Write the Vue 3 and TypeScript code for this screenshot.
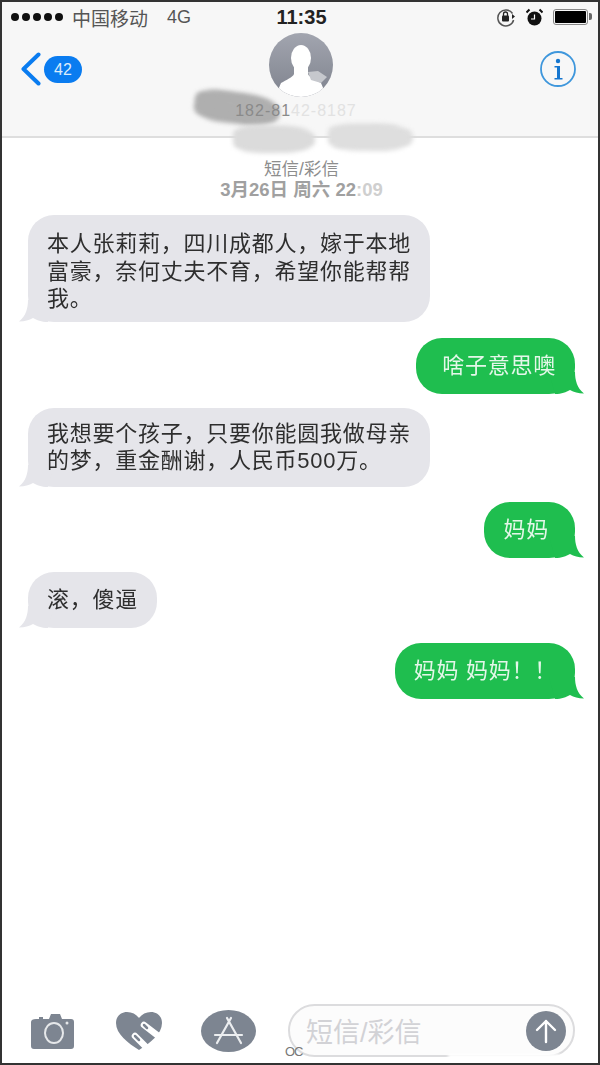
<template>
  <div class="phone">
    <header class="top">
      <span class="smudge s1"></span>
      <span class="smudge s2"></span>
      <span class="smudge s3"></span>
      <div class="status">
        <div class="status-left">
          <span class="dots"><i v-for="n in 5" :key="n"></i></span>
          <span class="carrier">中国移动</span>
          <span class="net">4G</span>
        </div>
        <div class="time">11:35</div>
        <div class="status-right">
          <svg width="20" height="20" viewBox="0 0 20 20">
            <path d="M16.5 6.5A8 8 0 1 0 17.6 13" fill="none" stroke="#555" stroke-width="1.5" />
            <path d="M15 9h5l-2.500 3z" fill="#222" transform="rotate(-90 17 10)" />
            <rect x="6" y="8.500" width="7" height="6" rx="1" fill="#222" />
            <path d="M7.500 9V7a2 2 0 0 1 4 0v2" fill="none" stroke="#222" stroke-width="1.300" />
          </svg>
          <svg width="17" height="19" viewBox="0 0 17 19">
            <circle cx="8.500" cy="10.500" r="7" fill="#111" />
            <path d="M8.500 6.500v4.500H5" fill="none" stroke="#fff" stroke-width="1.200" />
            <path d="M.5 4.500 3.500 1.500M16.500 4.500l-3-3" stroke="#111" stroke-width="2" />
          </svg>
          <span class="battery"><i></i></span>
        </div>
      </div>

      <div class="nav">
        <div class="back">
          <svg width="22" height="34" viewBox="0 0 22 34">
            <path d="M18.500 2.500 3.500 17l15 14.500" fill="none" stroke="#0a7cf0" stroke-width="4" stroke-linecap="round" stroke-linejoin="round" />
          </svg>
          <span class="count">42</span>
        </div>
        <div class="contact">
          <svg class="avatar" width="64" height="64" viewBox="0 0 64 64">
            <defs>
              <linearGradient id="av" x1="0" y1="0" x2="0" y2="1">
                <stop offset="0" stop-color="#a2a5af" />
                <stop offset="1" stop-color="#7f838e" />
              </linearGradient>
              <clipPath id="avc"><circle cx="32" cy="32" r="32" /></clipPath>
            </defs>
            <circle cx="32" cy="32" r="32" fill="url(#av)" />
            <g clip-path="url(#avc)">
              <ellipse cx="32" cy="25" rx="10" ry="13" fill="#fff" />
              <path d="M25 34h14v7c1 3 8 6 13 9l6 14H6l6-14c5-3 12-6 13-9z" fill="#fff" />
              <path d="M39 39 49 38 58 44 52 50 42 47z" fill="#c6c8cd" />
            </g>
          </svg>
          <div class="number">182-81<span class="faded">42-8187</span></div>
        </div>
        <svg class="info" width="38" height="38" viewBox="0 0 38 38">
          <circle cx="19" cy="19" r="17" fill="none" stroke="#3f97dc" stroke-width="1.800" />
          <circle cx="19" cy="11" r="2.200" fill="#1576cf" />
          <path d="M15.500 16H21v12h2.500v1.500h-8V28H18V17.500h-2.500z" fill="#1576cf" />
        </svg>
      </div>
    </header>

    <main class="thread">
      <div class="stamp">
        <div class="kind">短信/彩信</div>
        <div class="date">3月26日 周六 22<span class="faded">:09</span></div>
      </div>
      <div v-for="m in messages" :key="m.id" class="row" :class="m.mine ? 'mine' : 'theirs'" :style="{ marginTop: m.gap + 'px' }">
        <div class="bubble" :style="{ padding: `12px ${m.pad[1]}px 12px ${m.pad[0]}px` }">
          <span class="text">{{ m.text }}</span>
          <svg class="tail" width="36" height="22" viewBox="0 0 36 22">
            <path d="M10 0C10 8 8 16 1 21.500 7 21.500 11 20 15 18 19 20 23 22 30 22L36 0z" />
          </svg>
        </div>
      </div>
    </main>

    <footer class="bottom">
      <svg width="46" height="38" viewBox="0 0 46 38">
        <path d="M5 7h3V5h4v2h6l2-5h9l2 5h9c2 0 3 1 3 3v24c0 2-1 3-3 3H3c-2 0-3-1-3-3V10c0-2 2-3 5-3z" fill="#7d8591" />
        <ellipse cx="23" cy="21" rx="9" ry="10" fill="none" stroke="#e6e8ea" stroke-width="2" />
        <circle cx="36" cy="11" r="1.500" fill="#e6e8ea" />
      </svg>
      <svg width="46" height="40" viewBox="0 0 46 40">
        <path d="M23 39C12 32 0 23 0 12 0 5 5 1 11 1c5 0 9 2 12 6 3-4 7-6 12-6 6 0 11 4 11 11 0 11-12 20-23 27z" fill="#7d8591" />
        <path d="M28 14 50 31M19 25 36 42" stroke="#fff" stroke-width="6.500" stroke-linecap="round" />
        <path d="M28 14 31 17M19 25 23 29" stroke="#7d8591" stroke-width="2.500" stroke-linecap="round" />
      </svg>
      <svg width="55" height="42" viewBox="0 0 55 42">
        <ellipse cx="27.500" cy="21" rx="27.500" ry="21" fill="#7d8591" />
        <path d="M30 8 16 33M26 8l14 25M14 25h27" fill="none" stroke="#eceef0" stroke-width="2.200" stroke-linecap="round" />
      </svg>
      <div class="input">
        <span class="placeholder">短信/彩信</span>
        <span class="send">
          <svg width="24" height="26" viewBox="0 0 24 26">
            <path d="M12 24V3M3 12l9-9 9 9" fill="none" stroke="#fff" stroke-width="2.400" stroke-linecap="round" stroke-linejoin="round" />
          </svg>
        </span>
        <span class="mark">OC</span>
      </div>
    </footer>
    <span class="wipe"></span>
  </div>
</template>

<script setup lang="ts">
interface Message {
  id: number
  text: string
  mine: boolean
  gap: number
  pad: [number, number]
}

const messages: Message[] = [
  { id: 1, text: '本人张莉莉，四川成都人，嫁于本地\n富豪，奈何丈夫不育，希望你能帮帮\n我。', mine: false, gap: 16, pad: [19, 19] },
  { id: 2, text: '啥子意思噢', mine: true, gap: 16, pad: [26, 19] },
  { id: 3, text: '我想要个孩子，只要你能圆我做母亲\n的梦，重金酬谢，人民币500万。', mine: false, gap: 14, pad: [19, 19] },
  { id: 4, text: '妈妈', mine: true, gap: 15, pad: [19, 26] },
  { id: 5, text: '滚，傻逼', mine: false, gap: 14, pad: [19, 19] },
  { id: 6, text: '妈妈 妈妈！！', mine: true, gap: 15, pad: [19, 18] },
]
</script>

<style>
body {
  background: #fff;
}
</style>

<style scoped>
.phone {
  position: relative;
  display: flex;
  flex-direction: column;
  box-sizing: border-box;
  width: 600px;
  height: 1065px;
  overflow: hidden;
  border: 2px solid #333;
  background: #fff;
  color: #333;
  font-family: "Liberation Sans", "Noto Sans CJK SC", sans-serif;
}

.top {
  position: relative;
  flex: 0 0 auto;
  height: 136px;
  box-sizing: border-box;
  border-bottom: 2px solid #dedede;
  background: #f7f7f7;
}

.status {
  position: relative;
  display: grid;
  grid-template-columns: 1fr auto 1fr;
  align-items: center;
  height: 30px;
  padding: 0 6px 0 9px;
}

.status-left {
  display: flex;
  align-items: center;
  color: #555;
  font-size: 19px;
}

.dots {
  display: flex;
  gap: 3px;
  margin-right: 9px;
}

.dots i {
  width: 8px;
  height: 8px;
  border-radius: 50%;
  background: #111;
}

.carrier {
  width: 95px;
}

.net {
  font-size: 18px;
}

.time {
  color: #222;
  font-size: 20px;
  font-weight: 700;
}

.status-right {
  display: flex;
  align-items: center;
  justify-content: flex-end;
  gap: 10px;
}

.battery {
  position: relative;
  box-sizing: border-box;
  width: 35px;
  height: 16px;
  margin-right: 4px;
  padding: 1px;
  border: 1px solid #888;
  border-radius: 3px;
}

.battery i {
  display: block;
  height: 100%;
  border-radius: 1px;
  background: #000;
}

.battery::after {
  content: "";
  position: absolute;
  top: 3px;
  right: -5px;
  width: 3px;
  height: 7px;
  border-radius: 0 2px 2px 0;
  background: #666;
}

.nav {
  position: relative;
  display: flex;
  align-items: flex-start;
  justify-content: space-between;
  padding: 0 21px 0 18px;
}

.back {
  display: flex;
  align-items: center;
  gap: 2px;
  margin-top: 20px;
}

.count {
  width: 38px;
  height: 27px;
  border-radius: 14px;
  background: #0a7cf0;
  color: #dcecfb;
  font-size: 16px;
  line-height: 27px;
  text-align: center;
}

.contact {
  position: absolute;
  top: 1px;
  left: 229px;
  display: flex;
  flex-direction: column;
  align-items: center;
  width: 140px;
}

.avatar {
  display: block;
}

.number {
  margin-top: 5px;
  margin-right: 10px;
  color: #8a8a8a;
  font-size: 16px;
  letter-spacing: 1px;
  white-space: nowrap;
}

.number .faded {
  color: #e2e2e2;
}

.info {
  margin-top: 18px;
}

.smudge {
  position: absolute;
  border-radius: 30% 45% 40% 35%;
  filter: blur(2px);
}

.s1 {
  top: 90px;
  left: 192px;
  width: 86px;
  height: 32px;
  background: repeating-linear-gradient(4deg, #a6a6a6 0 3px, #b8b8b8 3px 6px);
  transform: rotate(7deg);
}

.s2 {
  top: 123px;
  left: 231px;
  width: 82px;
  height: 28px;
  background: repeating-linear-gradient(2deg, #d6d6d6 0 3px, #e0e0e0 3px 6px);
}

.s3 {
  top: 121px;
  left: 326px;
  width: 85px;
  height: 28px;
  background: repeating-linear-gradient(-2deg, #d8d8d8 0 3px, #e4e4e4 3px 6px);
}

.thread {
  flex: 1 1 auto;
  padding: 0 23px 0 26px;
}

.stamp {
  margin-top: 21px;
  color: #8d8d8d;
  text-align: center;
}

.kind {
  font-size: 17.500px;
  line-height: 20px;
}

.date {
  padding-top: 1px;
  color: #a0a0a0;
  font-size: 18.500px;
  font-weight: 700;
  line-height: 19px;
}

.date .faded {
  color: #cfcfcf;
}

.row {
  display: flex;
}

.row.mine {
  justify-content: flex-end;
}

.bubble {
  position: relative;
  display: flex;
  align-items: center;
  box-sizing: border-box;
  min-height: 56px;
  border-radius: 26px;
  font-size: 22px;
  letter-spacing: 0.750px;
  line-height: 27.500px;
  white-space: pre;
}

.text {
  position: relative;
  z-index: 1;
  filter: blur(0.3px);
}

.stamp + .row .text {
  top: 3px;
}

.theirs .bubble {
  background: #e5e5ea;
  color: #2e2e2e;
}

.mine .bubble {
  background: #1fbe4f;
  color: #e4f7e9;
}

.tail {
  position: absolute;
  bottom: 0;
}

.theirs .tail {
  left: -10px;
  fill: #e5e5ea;
}

.mine .tail {
  right: -10px;
  fill: #1fbe4f;
  transform: scaleX(-1);
}

.bottom {
  flex: 0 0 auto;
  display: flex;
  align-items: center;
  height: 61px;
  padding: 0 23px 2px 29px;
}

.bottom svg:nth-child(2),
.bottom svg:nth-child(3) {
  margin-left: 39px;
}

.input {
  position: relative;
  flex: 1 1 auto;
  display: flex;
  align-items: center;
  justify-content: space-between;
  box-sizing: border-box;
  height: 53px;
  margin-left: 32px;
  padding: 0 7px 0 16px;
  border: 2px solid #dcdcde;
  border-radius: 27px;
  background: #fcfcfc;
}

.placeholder {
  color: #d2d2d6;
  font-size: 27px;
}

.send {
  display: flex;
  align-items: center;
  justify-content: center;
  width: 40px;
  height: 40px;
  border-radius: 50%;
  background: #7d8591;
}

.mark {
  position: absolute;
  bottom: -3px;
  left: -5px;
  color: #777;
  font-size: 13px;
  letter-spacing: -1px;
  line-height: 12px;
}

.wipe {
  position: absolute;
  right: 38px;
  bottom: 0;
  width: 112px;
  height: 9px;
  background: #fff;
  filter: blur(1.500px);
}
</style>
